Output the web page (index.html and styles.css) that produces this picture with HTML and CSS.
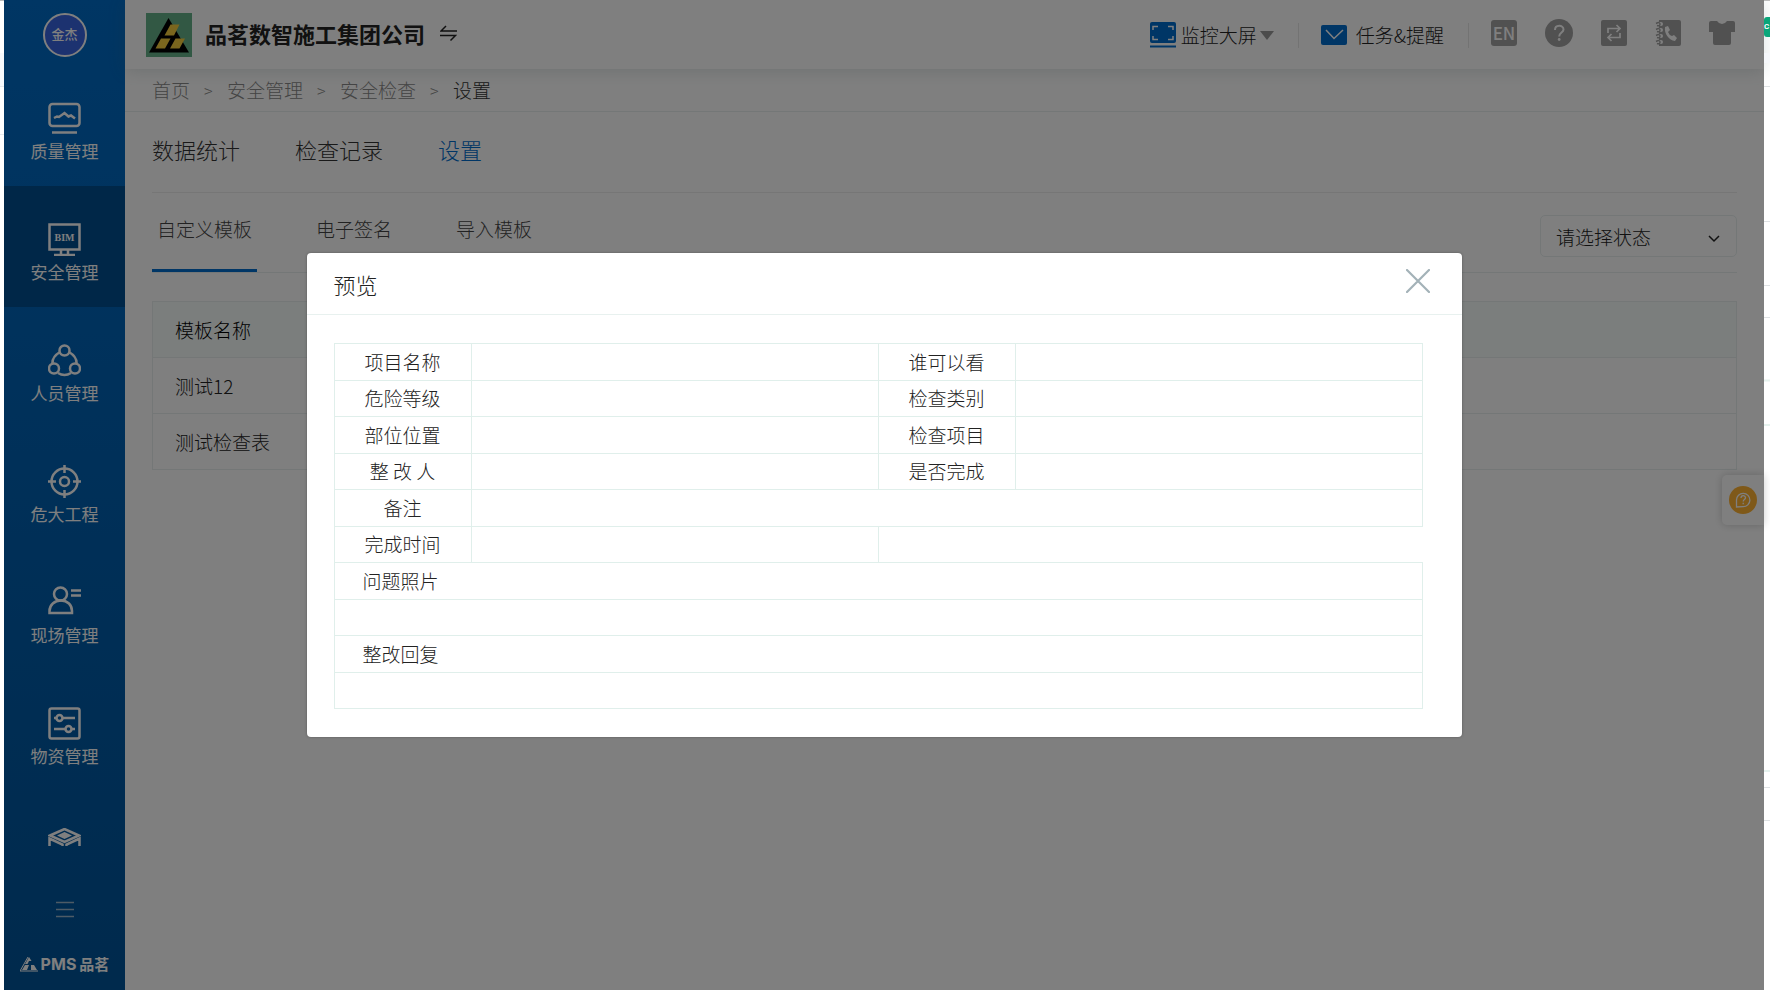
FILE: index.html
```html
<!DOCTYPE html>
<html lang="zh-CN">
<head>
<meta charset="utf-8">
<title>安全检查 - 设置</title>
<link rel="stylesheet" href="styles.css">
</head>
<body>
<div class="frame">
  <div class="edge">
    <svg class="edge-lines" width="4" height="990" aria-hidden="true">
      <rect y="53" width="4" height="34" fill="#f7f9fc"/>
      <path d="M0 86.500h4M0 134.500h4" stroke="#e6eaee"/>
    </svg>
  </div>
  <div class="app">
    <aside class="sidebar">
      <div class="avatar">金杰</div>
      <nav class="side-nav">
        <a class="side-item" href="#">
          <svg class="side-icon" viewBox="0 0 33 33"><rect x="1.500" y="2" width="30" height="22" rx="3"/><path d="M6 16l3-1.500 2 .5 5.500-4 4 3.500 2.500-1 4 3"/><path d="M4 30.500h25"/></svg>
          <span>质量管理</span>
        </a>
        <a class="side-item side-item-active" href="#">
          <svg class="side-icon" viewBox="0 0 33 33"><rect x="1.500" y="1.500" width="30" height="25"/><path d="M13 27v4M20 27v4M6 32h21"/><text x="16.500" y="18" class="bim">BIM</text></svg>
          <span>安全管理</span>
        </a>
        <a class="side-item" href="#">
          <svg class="side-icon" viewBox="0 0 33 33"><circle cx="16.500" cy="6.500" r="5"/><circle cx="6" cy="24.500" r="5"/><circle cx="27" cy="24.500" r="5"/><path d="M12 8C7 11 4 15 4.500 20M21 8c5 3 8 7 7.500 12M10 29c4 2.500 9 2.500 13 0"/></svg>
          <span>人员管理</span>
        </a>
        <a class="side-item" href="#">
          <svg class="side-icon" viewBox="0 0 33 33"><circle cx="16.500" cy="16.500" r="13"/><circle cx="16.500" cy="16.500" r="4.500"/><path d="M16.500 0v8M16.500 25v8M0 16.500h8M25 16.500h8"/></svg>
          <span>危大工程</span>
        </a>
        <a class="side-item" href="#">
          <svg class="side-icon" viewBox="0 0 33 33"><circle cx="12.500" cy="8" r="6.500"/><path d="M1.500 27v-2c0-6 5-10.500 11.500-10.500s11 4.500 11 10.500v2zM23 4.500h10M23 9.500h10"/></svg>
          <span>现场管理</span>
        </a>
        <a class="side-item" href="#">
          <svg class="side-icon" viewBox="0 0 33 33"><rect x="1.500" y="1.500" width="30" height="30" rx="2"/><circle cx="11.500" cy="11" r="3"/><circle cx="20.500" cy="22" r="3"/><path d="M6 11h2.500M14.500 11H27M6 22h11.500M23.500 22H27"/></svg>
          <span>物资管理</span>
        </a>
        <a class="side-item" href="#" aria-label="更多">
          <svg class="side-icon" viewBox="0 0 33 33"><path d="M2 7.500L16.500 1 31 7.500 16.500 14z"/><path d="M9 7.500l7.500-3.500L24 7.500 16.500 11z" class="solid"/><path d="M1.500 18v-7.500l13 6V18M31.500 18v-7.500l-13 6V18"/></svg>
        </a>
      </nav>
      <button class="menu-toggle" aria-label="展开菜单">
        <svg width="18" height="17" viewBox="0 0 18 17"><path d="M0 1.500h18M0 8.500h18M0 15.500h18" stroke="#9db6cc" stroke-width="1.500"/></svg>
      </button>
      <div class="brand">
        <svg width="18" height="15" viewBox="0 0 18 15"><path d="M9 0l2.500 4H9L7.500 7H5zM5 8h4l-2 5H2zM11 8h3l3 5h-6z" fill="#fff"/><path d="M8 0L0 14h18" fill="none" stroke="#fff"/></svg>
        <span class="brand-pms">PMS</span><span>品茗</span>
      </div>
    </aside>

    <div class="main">
      <header class="topbar">
        <svg class="logo" viewBox="0 0 46 44"><rect width="46" height="44" fill="#64b088"/><path d="M22.500 5L43 39.500H3z" fill="#000"/><path d="M24.500 11.500h9L28 22.500h-9.500zM15 25.500h9.500l-5.500 10h-9.500zM29.500 25.500H39l-5.500 10H24z" fill="#f5cc3c"/></svg>
        <h1 class="company">品茗数智施工集团公司</h1>
        <button class="icon-btn swap" aria-label="切换公司"><svg width="17" height="17" viewBox="0 0 17 17"><path d="M6 1L1 6h16M0 10.500h15.500l-5 5" fill="none" stroke="#222" stroke-width="1.500"/></svg></button>
        <div class="tools">
          <button class="tool">
            <svg width="26" height="26" viewBox="0 0 26 26"><rect width="26" height="21" rx="2" fill="#006ccc"/><path d="M0 24.500h26" stroke="#006ccc" stroke-width="2"/><path d="M3 8V4.500h5M18 4.500h5V8M3 14v3.500h5M18 17.500h5V14" fill="none" stroke="#fff" stroke-width="1.500"/></svg>
            <span>监控大屏</span>
            <svg class="caret" width="14" height="9" viewBox="0 0 14 9"><path d="M0 0h14L7 9z" fill="#999"/></svg>
          </button>
          <span class="divider"></span>
          <button class="tool tool-task">
            <svg width="26" height="20" viewBox="0 0 26 20"><rect width="26" height="20" rx="2" fill="#006ccc"/><path d="M5 5l8 8.500L22 5" fill="none" stroke="#fff" stroke-width="1.500"/></svg>
            <span>任务&amp;提醒</span>
          </button>
          <span class="divider"></span>
          <div class="icon-row">
            <button class="icon-btn lang">EN</button>
            <button class="icon-btn" aria-label="帮助"><svg width="28" height="28" viewBox="0 0 28 28"><circle cx="14" cy="14" r="14" fill="#a2a2a2"/><path d="M10 11c0-5.500 8.500-5.500 8.500-.5 0 3-4.300 3.200-4.300 7" fill="none" stroke="#fff" stroke-width="2"/><circle cx="14.200" cy="20.500" r="1.400" fill="#fff"/></svg></button>
            <button class="icon-btn" aria-label="切换"><svg width="26" height="26" viewBox="0 0 26 26"><rect width="26" height="26" rx="2" fill="#a2a2a2"/><path d="M7 13V8.500h11M15.500 5l3.500 3.500-3.500 3.500M19 13v4.500H8M10.500 14L7 17.500l3.500 3.500" fill="none" stroke="#fff" stroke-width="1.700"/></svg></button>
            <button class="icon-btn" aria-label="通讯录"><svg width="26" height="26" viewBox="0 0 26 26"><path d="M4 0h20q2 0 2 2v22q0 2-2 2H4z" fill="#a2a2a2"/><path d="M1 4h5M1 10h5M1 16h5M1 22h5" stroke="#fff" stroke-width="4" stroke-linecap="round"/><path d="M1 3.500q4-2 4 .5t-3 1.500M1 9.500q4-2 4 .5t-3 1.500M1 15.500q4-2 4 .5t-3 1.500M1 21.500q4-2 4 .5t-3 1.500" fill="none" stroke="#a2a2a2" stroke-width="1.500"/><path d="M10 7l3-1 2 4-2 2q1 3 4 4l2-1 3 3-2 3C14 20 9 14 10 7z" fill="#fff"/></svg></button>
            <button class="icon-btn" aria-label="换肤"><svg width="26" height="26" viewBox="0 0 26 26"><path d="M2 1h6q2 3 5 3t5-3h6q2 0 2 2v9h-4v11q0 2-2 2H6q-2 0-2-2V12H0V3q0-2 2-2z" fill="#a2a2a2"/></svg></button>
          </div>
        </div>
      </header>

      <nav class="crumbs" aria-label="路径">
        <a href="#">首页</a><span class="sep">&gt;</span><a href="#">安全管理</a><span class="sep">&gt;</span><a href="#">安全检查</a><span class="sep">&gt;</span><span class="current">设置</span>
      </nav>

      <div class="content">
        <nav class="tabs">
          <a href="#">数据统计</a><a href="#">检查记录</a><a href="#" class="tab-active">设置</a>
        </nav>
        <div class="subbar">
          <nav class="subtabs">
            <a href="#" class="subtab-active">自定义模板</a><a href="#">电子签名</a><a href="#">导入模板</a>
          </nav>
          <div class="select-box">
            <select aria-label="状态"><option>请选择状态</option></select>
            <svg class="chevron" width="12" height="8" viewBox="0 0 12 8"><path d="M1 1l5 5 5-5" fill="none" stroke="#222" stroke-width="1.500"/></svg>
          </div>
        </div>
        <table class="list">
          <thead><tr><th>模板名称</th></tr></thead>
          <tbody><tr><td>测试12</td></tr><tr><td>测试检查表</td></tr></tbody>
        </table>
      </div>
      <button class="float-help" aria-label="在线帮助">
        <svg width="28" height="28" viewBox="0 0 28 28"><circle cx="14" cy="14" r="14" fill="#ffb232"/><path d="M7.500 21v-7A6.700 6.700 0 1 1 14 20.700z" fill="none" stroke="#fff" stroke-width="1.300"/><path d="M12 12c0-3 4.500-3 4.500-.2 0 1.700-2.300 1.800-2.300 3.700M14.200 16.800v1.400" fill="none" stroke="#fff" stroke-width="1.300"/></svg>
      </button>
    </div>

    <div class="overlay">
      <section class="dialog" role="dialog" aria-labelledby="dialog-title">
        <header class="dialog-head">
          <h2 id="dialog-title">预览</h2>
          <button class="icon-btn close" aria-label="关闭"><svg width="24" height="24" viewBox="0 0 24 24"><path d="M1 1l22 22M23 1L1 23" stroke="#a3b2b8" stroke-width="2.200" stroke-linecap="round"/></svg></button>
        </header>
        <div class="dialog-body">
          <table class="form">
            <colgroup><col class="col-label"><col><col class="col-label"><col></colgroup>
            <tr><th>项目名称</th><td></td><th>谁可以看</th><td></td></tr>
            <tr><th>危险等级</th><td></td><th>检查类别</th><td></td></tr>
            <tr><th>部位位置</th><td></td><th>检查项目</th><td></td></tr>
            <tr><th>整 改 人</th><td></td><th>是否完成</th><td></td></tr>
            <tr><th>备注</th><td colspan="3"></td></tr>
            <tr><th>完成时间</th><td></td><td colspan="2" class="blank"></td></tr>
            <tr><th colspan="4" class="wide">问题照片</th></tr>
            <tr><td colspan="4"></td></tr>
            <tr><th colspan="4" class="wide">整改回复</th></tr>
            <tr><td colspan="4"></td></tr>
          </table>
        </div>
      </section>
    </div>
  </div>
  <div class="edge">
    <svg class="edge-lines" width="6" height="990" aria-hidden="true">
      <rect y="53" width="6" height="10" fill="#f5f7fa"/>
      <path d="M0 86.500h6M0 221.500h6M0 285.500h6M0 317.500h6M0 787.500h6M0 820.500h6" stroke="#dfe2e4"/>
      <path d="M0 380.500h6M0 425h6M0 771h6" stroke="#e6f2ee" stroke-width="2"/>
    </svg>
    <span class="edge-badge">C</span>
  </div>
</div>
</body>
</html>
```
FILE: styles.css
```css
* {
  box-sizing: border-box;
}

body {
  margin: 0;
  background: #fff;
  color: #222;
  font-family: "Noto Sans CJK SC", "Noto Sans", sans-serif;
  font-size: 19px;
  font-weight: 300;
  line-height: 28px;
}

a {
  color: inherit;
  text-decoration: none;
}

button,
select {
  font: inherit;
  color: inherit;
  background: none;
  border: 0;
  padding: 0;
}

svg {
  display: block;
  flex: none;
}

h1,
h2 {
  margin: 0;
  font-size: 22px;
}

.frame {
  display: grid;
  grid-template-columns: 4px 1fr 6px;
  min-height: 100vh;
}

.edge {
  position: relative;
  overflow: hidden;
  border-top: 1px solid #bbb;
}

.edge-lines {
  position: absolute;
  top: -1px;
  left: 0;
}

.edge-badge {
  position: absolute;
  top: 16px;
  left: 0;
  width: 6px;
  border-radius: 3px 0 0 3px;
  background: #0aa67a;
  color: #fff;
  font: 700 8px/20px Roboto, sans-serif;
}

.app {
  position: relative;
  display: grid;
  grid-template-columns: 121px 1fr;
}

/* Sidebar */
.sidebar {
  display: flex;
  flex-direction: column;
  align-items: center;
  height: 100vh;
  background: linear-gradient(#006cc8, #00549a);
  color: #fff;
}

.avatar {
  flex: none;
  width: 44px;
  height: 44px;
  margin: 13px 0 8px;
  border: 2px solid #fff;
  border-radius: 50%;
  background: #3864e0;
  font-size: 13px;
  font-weight: 500;
  line-height: 38px;
  text-align: center;
}

.side-nav {
  flex: 1;
  align-self: stretch;
  overflow: hidden;
}

.side-item {
  display: flex;
  flex-direction: column;
  align-items: center;
  gap: 3px;
  height: 121px;
  padding-top: 37px;
  font-size: 17px;
  font-weight: 400;
  line-height: 26px;
}

.side-item-active {
  background: #004e90;
}

.side-icon {
  width: 33px;
  height: 33px;
  fill: none;
  stroke: #fff;
  stroke-width: 2.5px;
}

.side-icon .solid {
  fill: #fff;
  stroke-width: 0;
}

.side-icon .bim {
  fill: #fff;
  stroke: none;
  font: bold 10px "Liberation Serif", serif;
  text-anchor: middle;
}

.menu-toggle {
  padding: 54px 20px 36px;
}

.brand {
  display: flex;
  align-items: center;
  gap: 3px;
  height: 20px;
  margin-bottom: 16px;
  font-size: 15px;
  font-weight: 700;
  line-height: 20px;
}

.brand-pms {
  font-family: Inter, "Liberation Sans", sans-serif;
  font-size: 16px;
}

/* Main column */
.main {
  position: relative;
  min-width: 0;
}

.topbar {
  display: flex;
  align-items: center;
  height: 69px;
  padding: 1px 29px 0 21px;
  box-shadow: 0 2px 16px rgba(80, 110, 110, 0.2);
}

.logo {
  width: 46px;
  height: 44px;
}

.company {
  margin: 0 15px 4px 13px;
  font-weight: 700;
}

.swap {
  margin-bottom: 4px;
}

.tools,
.tool,
.icon-row {
  display: flex;
  align-items: center;
}

.tools {
  margin-left: auto;
}

.tool {
  gap: 5px;
  white-space: nowrap;
}

.tool-task {
  gap: 9px;
}

.caret {
  margin-left: -2px;
}

.divider {
  width: 1px;
  height: 25px;
  margin: 0 22px 0 24px;
  background: #e6e6e6;
}

.icon-row {
  gap: 28px;
  margin-bottom: 4px;
}

.lang {
  width: 26px;
  height: 26px;
  border-radius: 3px;
  background: #a2a2a2;
  color: #fff;
  font: 500 17px/26px "Noto Sans CJK SC", sans-serif;
}

.crumbs {
  display: flex;
  align-items: center;
  gap: 14px;
  height: 43px;
  padding: 0 27px;
  border-bottom: 1px solid #e8efef;
  color: #888;
}

.sep {
  width: 9px;
  font-size: 16px;
}

.current {
  color: #333;
}

.content {
  padding: 0 27px;
}

.tabs {
  display: flex;
  align-items: center;
  gap: 55px;
  height: 81px;
  padding-bottom: 7px;
  border-bottom: 1px solid #ececec;
  color: #333;
  font-size: 22px;
}

.tab-active {
  color: #006ccc;
}

.subbar {
  display: flex;
  justify-content: space-between;
  align-items: center;
  height: 80px;
  border-bottom: 1px solid #e8efef;
}

.subtabs {
  display: flex;
  gap: 54px;
  height: 79px;
  color: #444;
}

.subtabs a {
  padding: 22px 5px 0;
  border-bottom: 3px solid transparent;
}

.subtabs .subtab-active {
  border-color: #006ccc;
}

.select-box {
  position: relative;
  margin-top: 6px;
}

.select-box select {
  width: 197px;
  height: 42px;
  padding: 2px 15px 0;
  border: 1px solid #e8efef;
  border-radius: 5px;
  appearance: none;
}

.chevron {
  position: absolute;
  top: 20px;
  right: 17px;
  pointer-events: none;
}

.list {
  width: 100%;
  margin-top: 28px;
  border: 1px solid #e8efef;
  border-collapse: collapse;
}

.list th,
.list td {
  height: 56px;
  padding: 0 22px;
  border-bottom: 1px solid #e8efef;
  font-weight: 300;
  text-align: left;
}

.list th {
  background: #f7fdfb;
  color: #000;
}

.float-help {
  position: absolute;
  top: 475px;
  right: 0;
  width: 42px;
  height: 50px;
  padding-left: 7px;
  border-radius: 5px 0 0 5px;
  background: #fff;
  box-shadow: 0 0 8px rgba(0, 0, 0, 0.2);
}

/* Preview dialog */
.overlay {
  position: absolute;
  inset: 0;
  display: flex;
  align-items: center;
  justify-content: center;
  background: rgba(0, 0, 0, 0.5);
}

.dialog {
  width: 1155px;
  max-width: 90%;
  border-radius: 4px;
  background: #fff;
  box-shadow: 0 0 3px rgba(0, 0, 0, 0.3);
}

.dialog-head {
  display: flex;
  align-items: center;
  justify-content: space-between;
  height: 62px;
  padding: 0 32px 0 27px;
  border-bottom: 1px solid #e8f1ef;
}

.dialog-head h2 {
  font-weight: 300;
}

.close {
  margin-bottom: 6px;
}

.dialog-body {
  padding: 28px 39px 28px 27px;
}

.form {
  width: 100%;
  height: 366px;
  table-layout: fixed;
  border: 1px solid #e6f2ee;
  border-collapse: collapse;
}

.col-label {
  width: 137px;
}

.form th,
.form td {
  height: 36px;
  padding: 0;
  border: 1px solid #e0efeb;
}

.form th {
  font-weight: 300;
}

.form .wide {
  padding-left: 28px;
  text-align: left;
}

.form .blank {
  border-right-color: #fff;
}
```
